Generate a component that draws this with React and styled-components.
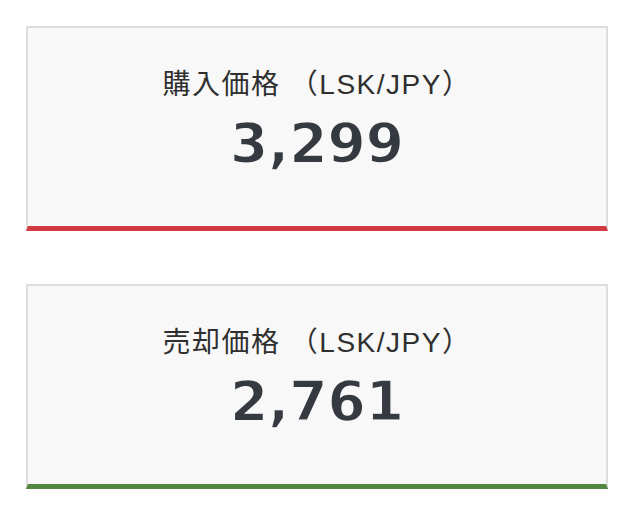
import React from "react";
import styled, { createGlobalStyle } from "styled-components";

const GlobalStyle = createGlobalStyle`
  body {
    margin: 0;
    background: #ffffff;
    font-family: "Liberation Sans", "Noto Sans CJK JP", sans-serif;
  }
`;

const cardBg = "#f8f8f8";

const Wrapper = styled.div`
  display: flex;
  flex-direction: column;
  gap: 53px;
  padding: 26px 31px 0 26px;
`;

const PriceCard = styled.div`
  display: flex;
  flex-direction: column;
  align-items: center;
  height: 198px;
  box-sizing: content-box;
  background: ${cardBg};
  border: 2px solid #dddddd;
  border-bottom: 5px solid ${(p) => p.$accent};
`;

const Label = styled.div`
  margin-top: 40px;
  font-size: 28px;
  line-height: 34px;
  letter-spacing: 1.5px;
  color: #2f2f2f;
  white-space: nowrap;
`;

/* bold face, trimmed a touch with a card-coloured outline */
const Price = styled.div`
  margin-top: 14px;
  font-family: "DejaVu Sans", "Liberation Sans", sans-serif;
  font-size: 55px;
  line-height: 55px;
  font-weight: 700;
  color: #343a40;
  -webkit-text-stroke: 1.4px ${cardBg};
`;

const prices = [
  { label: "購入価格 （LSK/JPY）", value: "3,299", accent: "#d23a42" },
  { label: "売却価格 （LSK/JPY）", value: "2,761", accent: "#518743" },
];

export default function App() {
  return (
    <>
      <GlobalStyle />
      <Wrapper>
        {prices.map((p) => (
          <PriceCard key={p.label} $accent={p.accent}>
            <Label>{p.label}</Label>
            <Price>{p.value}</Price>
          </PriceCard>
        ))}
      </Wrapper>
    </>
  );
}
